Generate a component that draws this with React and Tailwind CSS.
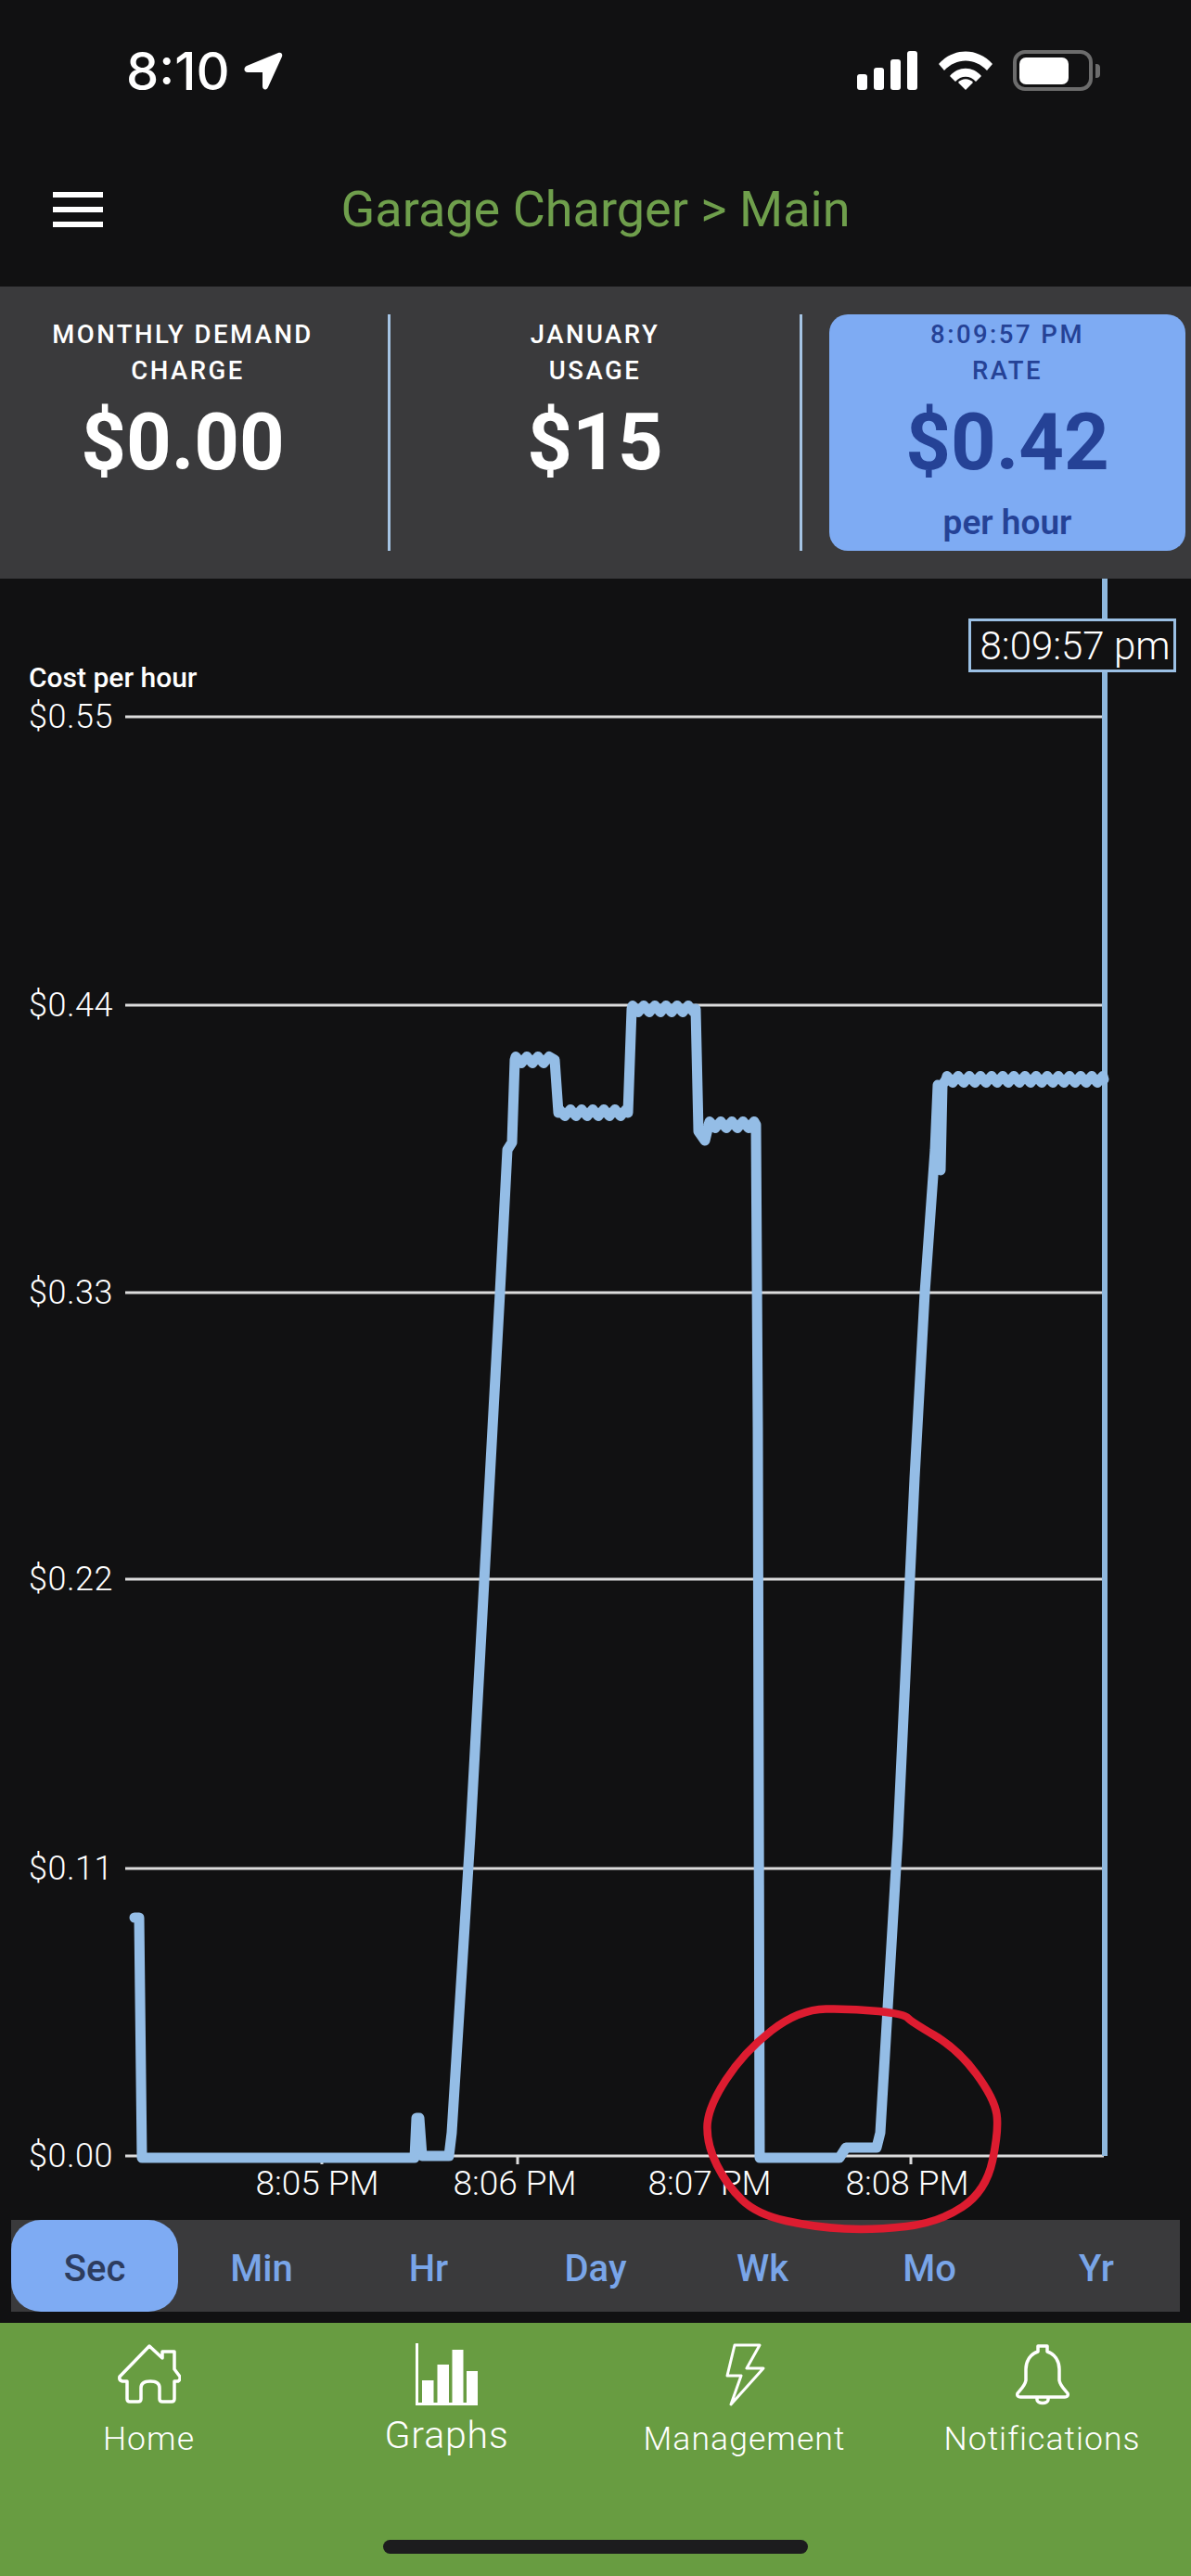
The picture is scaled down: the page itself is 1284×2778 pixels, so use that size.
const roboto = { fontFamily: 'Roboto, sans-serif' }

// plateau with the jitter the live data has
function wiggle(x0, x1, y, step = 6, amp = 3.5) {
  let d = ''
  let up = true
  for (let x = x0; x < x1; x += step) {
    d += ` L${x} ${y + (up ? -amp : amp)}`
    up = !up
  }
  return d + ` L${x1} ${y}`
}

function smooth(points) {
  const mid = (a, b) => [(a[0] + b[0]) / 2, (a[1] + b[1]) / 2]
  let start = mid(points[points.length - 1], points[0])
  let d = `M${start[0]} ${start[1]}`
  points.forEach((p, i) => {
    const m = mid(p, points[(i + 1) % points.length])
    d += ` Q${p[0]} ${p[1]} ${m[0]} ${m[1]}`
  })
  return d + ' Z'
}

const costLine =
  'M145 2068 L150 2068 L153 2327 L444 2327 L447 2327 L449 2284 L452 2284 L455 2325 L484 2325 L487 2300' +
  ' L507 1980 L531 1540 L539 1394 L547 1240 L552 1232 L555 1143' +
  wiggle(556, 598, 1143) +
  ' L602 1200' +
  wiggle(603, 677, 1200) +
  ' L681 1088' +
  wiggle(682, 750, 1088) +
  ' L753 1220 L760 1230 L764 1213' +
  wiggle(765, 815, 1213) +
  ' L817 1540 L819 2327 L905 2327 L912 2316 L945 2316 L949 2300 L968 1980 L986 1594 L997 1394 L1008 1240 L1011 1170 L1014 1262 L1016 1170 L1020 1164' +
  wiggle(1021, 1190, 1164)

const circle = smooth([
  [861, 2167], [920, 2166], [975, 2172], [982, 2180], [1033, 2210], [1072, 2263], [1077, 2297],
  [1063, 2363], [1012, 2397], [942, 2405], [879, 2402], [816, 2388], [784, 2357], [762, 2313],
  [763, 2273], [802, 2213],
])

const yLabels = [
  ['$0.55', 773],
  ['$0.44', 1084],
  ['$0.33', 1394],
  ['$0.22', 1703],
  ['$0.11', 2015],
  ['$0.00', 2325],
]
const xLabels = [
  ['8:05 PM', 347, 342],
  ['8:06 PM', 558, 555],
  ['8:07 PM', 770, 765],
  ['8:08 PM', 982, 978],
]

function StatusBar() {
  return (
    <div className="flex h-[150px] items-start justify-between pl-[136px] pr-[98px] pt-[54px]">
      <div className="flex items-center gap-[15px]">
        <span className="text-[56px] leading-[46px] font-medium text-white" style={{ fontFamily: 'Inter, sans-serif' }}>8:10</span>
        <svg width="42" height="42" viewBox="0 0 42 42" fill="white">
          <path d="M37 1 C40 0 42 2 41 5 L26 38 C24 42 20 41 20 37 L20 22 L4 22 C0 22 -1 17 3 15 Z" />
        </svg>
      </div>
      <div className="flex items-center">
        <svg width="66" height="42" viewBox="0 0 66 42" fill="white">
          <rect x="0" y="25" width="11" height="17" rx="3" />
          <rect x="18" y="18" width="11" height="24" rx="3" />
          <rect x="36" y="9" width="11" height="33" rx="3" />
          <rect x="54" y="0" width="11" height="42" rx="3" />
        </svg>
        <svg className="ml-[22px]" width="58" height="42" viewBox="0 0 58 42" fill="white">
          <path d="M0 14 C16 -4 42 -4 58 14 L52 21 C39 7 19 7 6 21 Z" />
          <path d="M12 27 C21 16 37 16 46 27 L40 33 C34 26 24 26 18 33 Z" />
          <path d="M21 34 C25 29 33 29 37 34 L29 42 Z" />
        </svg>
        <div className="ml-[22px] flex h-[44px] w-[86px] items-center rounded-[13px] border-[4px] border-[#6c6c6c] pl-[3px]">
          <div className="h-[29px] w-[53px] rounded-[7px] bg-white"></div>
        </div>
        <div className="ml-[3px] h-[15px] w-[5px] rounded-r-[4px] bg-[#6c6c6c]"></div>
      </div>
    </div>
  )
}

function Header() {
  return (
    <div className="relative flex h-[159px] items-start justify-center pt-[46px]">
      <div className="absolute left-[57px] top-[57px] flex w-[54px] flex-col gap-[10px]">
        <div className="h-[6px] bg-white"></div>
        <div className="h-[6px] bg-white"></div>
        <div className="h-[6px] bg-white"></div>
      </div>
      <div className="text-[54px] leading-[60px] text-[#6f9f4c]" style={roboto}>Garage Charger &gt; Main</div>
    </div>
  )
}

function Stat({ lines, value, unit, active, nudge }) {
  return (
    <div className={`flex h-[255px] flex-col items-center pt-[2px] ${active ? 'text-[#254296]' : 'text-white'}`}>
      {lines.map((l, i) => (
        <div key={l} className={`text-[27.5px] leading-[39px] font-medium tracking-[0.09em] ${nudge && i === 1 ? 'pl-[11px]' : ''}`}>{l}</div>
      ))}
      <div className="text-[85px] leading-[117px] font-bold">{value}</div>
      {unit && <div className="text-[37px] leading-[56px] font-semibold">{unit}</div>}
    </div>
  )
}

function Stats() {
  return (
    <div className="flex h-[315px] items-start bg-[#3a3a3c] pt-[30px]" style={roboto}>
      <div className="w-[418px] pr-[24px]">
        <Stat lines={['MONTHLY DEMAND', 'CHARGE']} value="$0.00" nudge />
      </div>
      <div className="h-[255px] w-[3px] bg-[#a5c4e4]"></div>
      <div className="w-[441px]">
        <Stat lines={['JANUARY', 'USAGE']} value="$15" />
      </div>
      <div className="h-[255px] w-[3px] bg-[#a5c4e4]"></div>
      <div className="ml-[29px] w-[384px] rounded-[20px] bg-[#7eabf3]">
        <Stat lines={['8:09:57 PM', 'RATE']} value="$0.42" unit="per hour" active />
      </div>
    </div>
  )
}

function Chart() {
  return (
    <div className="relative z-10 h-[1770px]" style={roboto}>
      <svg className="block overflow-visible" width="1284" height="1770" viewBox="0 624 1284 1770">
        <text x="31" y="741" fill="white" fontSize="30" fontWeight="500">Cost per hour</text>
        {yLabels.map(([label, y]) => (
          <g key={label}>
            <line x1="135" x2="1190" y1={y} y2={y} stroke="#dcdcdc" strokeWidth="3" />
            <text x="31" y={y + 12} fill="white" fontSize="36" fontWeight="300" letterSpacing="0.5">{label}</text>
          </g>
        ))}
        {xLabels.map(([label, tick, x]) => (
          <g key={label}>
            <line x1={tick} x2={tick} y1="2325" y2="2334" stroke="#dcdcdc" strokeWidth="3" />
            <text x={x} y="2367" fill="white" fontSize="37" fontWeight="300" textAnchor="middle">{label}</text>
          </g>
        ))}
        <line x1="1191" x2="1191" y1="624" y2="2325" stroke="#8fb8dd" strokeWidth="6" />
        <path d={costLine} fill="none" stroke="#94bde6" strokeWidth="11" strokeLinejoin="round" strokeLinecap="round" />
        <path d={circle} fill="none" stroke="#dd1c30" strokeWidth="8.5" />
      </svg>
      <div className="absolute left-[1044px] top-[43px] flex h-[58px] w-[224px] items-center justify-center border-[3px] border-[#9bc0e4] bg-[#111112] pl-[6px] text-[42px] font-light whitespace-nowrap text-white">
        8:09:57 pm
      </div>
    </div>
  )
}

function RangeTabs() {
  const tabs = ['Sec', 'Min', 'Hr', 'Day', 'Wk', 'Mo', 'Yr']
  return (
    <div className="mx-[12px] grid h-[99px] grid-cols-7 bg-[#3a3a3c]" style={roboto}>
      {tabs.map((t, i) => (
        <div
          key={t}
          className={`flex items-center justify-center pt-[6px] text-[40px] font-medium ${i === 0 ? 'rounded-[32px] bg-[#7eabf3] text-[#2d3c5e]' : 'text-[#79a5e8]'}`}
        >
          {t}
        </div>
      ))}
    </div>
  )
}

function HomeIcon() {
  return (
    <svg width="68" height="68" viewBox="0 0 68 68" fill="none" stroke="white" strokeWidth="3.5" strokeLinejoin="round">
      <path d="M34 3 L2 36 Q1 40 5 41 L10 41 L10 60 Q10 63 13 63 L22 63 Q25 63 25 60 L25 48 Q25 41 35 41 Q45 41 45 48 L45 60 Q45 63 48 63 L58 63 Q61 63 61 60 L61 41 L65 41 Q68 39 67 36 L61 28 L61 9 L48 9 L48 16 Z" />
    </svg>
  )
}

function GraphIcon() {
  return (
    <svg width="68" height="68" viewBox="0 0 68 68" fill="white">
      <rect x="0" y="0" width="3" height="67" />
      <rect x="0" y="64" width="67" height="3" />
      <rect x="7" y="40" width="12.5" height="26" />
      <rect x="23.5" y="23" width="12.5" height="43" />
      <rect x="39.5" y="7" width="12" height="59" />
      <rect x="55" y="30" width="12" height="36" />
    </svg>
  )
}

function BoltIcon() {
  return (
    <svg width="68" height="68" viewBox="0 0 68 68" fill="none" stroke="white" strokeWidth="3" strokeLinejoin="round">
      <path d="M23 2 L50 2 L36 27 L54 27 L19 66 L30 35 L15 35 Z" />
    </svg>
  )
}

function BellIcon() {
  return (
    <svg width="68" height="68" viewBox="0 0 68 68" fill="none" stroke="white" strokeWidth="3.5" strokeLinejoin="round">
      <path d="M29 3 H39 V9 C48 12 52 20 52 28 V40 C53 46 58 50 61 54 C62 57 60 58 58 58 H10 C8 58 6 57 7 54 C10 50 15 46 16 40 V28 C16 20 20 12 29 9 Z" />
      <path d="M28 58 v3 a6 3.5 0 0 0 12 0 v-3" />
    </svg>
  )
}

function TabBar() {
  const items = [
    { label: 'Home', icon: <HomeIcon /> },
    { label: 'Graphs', icon: <GraphIcon />, active: true },
    { label: 'Management', icon: <BoltIcon /> },
    { label: 'Notifications', icon: <BellIcon /> },
  ]
  return (
    <div className="mt-[12px] flex h-[273px] flex-col bg-[#689c41] pt-[22px]" style={roboto}>
      <div className="grid grid-cols-4">
        {items.map((item) => (
          <div key={item.label} className="flex flex-col items-center text-white">
            {item.icon}
            {item.active ? (
              <div className="mt-[11px] text-[41px] leading-[40px] font-light tracking-[0.02em]">{item.label}</div>
            ) : (
              <div className="mt-[15px] text-[35.5px] leading-[40px] font-light tracking-[0.03em]">{item.label}</div>
            )}
          </div>
        ))}
      </div>
      <div className="mx-auto mb-[24px] mt-auto h-[15px] w-[458px] rounded-full bg-[#1c1c1e]"></div>
    </div>
  )
}

export default function App() {
  return (
    <div className="flex h-[2778px] w-[1284px] flex-col overflow-hidden bg-[#111112]">
      <StatusBar />
      <Header />
      <Stats />
      <Chart />
      <RangeTabs />
      <TabBar />
    </div>
  )
}
